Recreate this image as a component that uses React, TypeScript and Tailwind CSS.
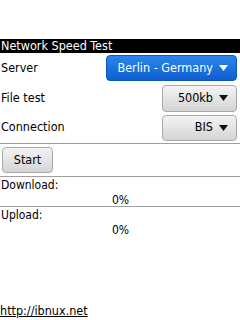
import React from "react";

const Tri = ({ white }: { white?: boolean }) => (
  <svg width="9" height="6" viewBox="0 0 9 6" className="ml-[6px]">
    <path d="M0 0 H9 L4.5 6 Z" fill={white ? "#ffffff" : "#111111"} />
  </svg>
);

export default function App() {
  return (
    <div
      className="w-[240px] h-[320px] bg-white flex flex-col text-black"
      style={{ fontFamily: '"DejaVu Sans Condensed", "DejaVu Sans", sans-serif' }}
    >
      <div className="h-[39px]" />
      <div className="h-[14px] bg-black text-white text-[12.5px] leading-[14px] pl-[1px]">Network Speed Test</div>
      <div className="flex items-center justify-between h-[30px] pr-[3px]">
        <span className="text-[12.5px] pl-[1px]">Server</span>
        <div className="w-[131px] h-[26px] rounded-[4px] bg-gradient-to-b from-[#2a86ee] to-[#0f5fcf] border border-[#0d56b8] flex items-center justify-end pr-[8px] text-white text-[12.5px]">
          Berlin - Germany<Tri white />
        </div>
      </div>
      <div className="flex items-center justify-between h-[30px] pr-[3px]">
        <span className="text-[12.5px] pl-[1px]">File test</span>
        <div className="w-[75px] h-[27px] rounded-[4px] bg-gradient-to-b from-[#f4f4f4] to-[#d4d4d4] border border-[#a8a8a8] flex items-center justify-end pr-[8px] text-[12.5px]">
          500kb<Tri />
        </div>
      </div>
      <div className="flex items-center justify-between h-[29px] pr-[3px]">
        <span className="text-[12.5px] pl-[1px]">Connection</span>
        <div className="w-[75px] h-[26px] rounded-[4px] bg-gradient-to-b from-[#f4f4f4] to-[#d4d4d4] border border-[#a8a8a8] flex items-center justify-end pr-[8px] text-[12.5px]">
          BIS<Tri />
        </div>
      </div>
      <div className="h-[1px] bg-[#a0a0a0] mt-[1px]" />
      <div className="h-[32px] flex items-center pl-[2px]">
        <div className="w-[51px] h-[26px] rounded-[4px] bg-gradient-to-b from-[#f4f4f4] to-[#d4d4d4] border border-[#a8a8a8] flex items-center justify-center text-[12.5px]">
          Start
        </div>
      </div>
      <div className="h-[1px] bg-[#a0a0a0]" />
      <div className="h-[29px] flex flex-col text-[12px] leading-[15px] pl-[1px] pt-[1px]">
        <span>Download:</span>
        <span className="self-center">0%</span>
      </div>
      <div className="h-[1px] bg-[#a0a0a0]" />
      <div className="h-[29px] flex flex-col text-[12px] leading-[15px] pl-[1px] pt-[1px]">
        <span>Upload:</span>
        <span className="self-center">0%</span>
      </div>
      <div className="flex-1" />
      <div className="h-[16px] text-[12.5px] leading-[14px] underline pb-[2px]">http://ibnux.net</div>
    </div>
  );
}
